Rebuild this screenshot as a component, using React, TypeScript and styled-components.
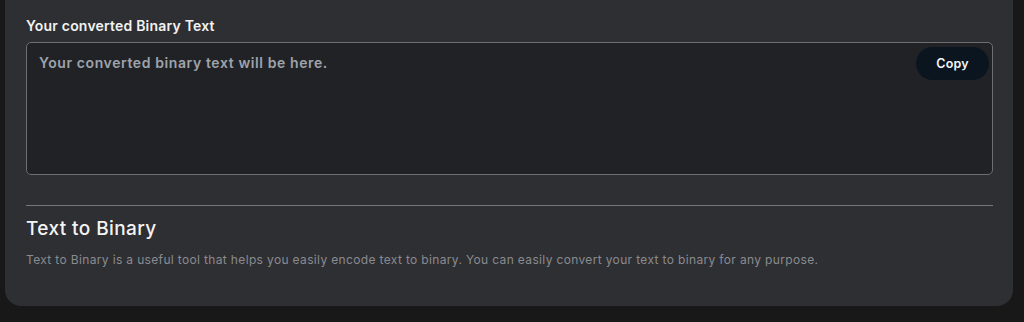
import React from "react";
import styled, { createGlobalStyle } from "styled-components";

const Global = createGlobalStyle`
  html, body { margin: 0; padding: 0; background: #181819; }
  body { font-family: Inter, "Noto Sans", sans-serif; }
`;

const Page = styled.div`
  width: 1024px;
  height: 322px;
  overflow: hidden;
  padding: 0 11px 0 5px;
  box-sizing: border-box;
`;

const Card = styled.section`
  background: #2e2f33;
  border-radius: 0 0 16px 16px;
  padding: 17px 20px 38px 21px;
  display: flex;
  flex-direction: column;
`;

const Label = styled.label`
  color: #f2f2f2;
  font-size: 14px;
  font-weight: 600;
  letter-spacing: 0.2px;
  line-height: 17px;
  margin-bottom: 8px;
`;

const OutputBox = styled.div`
  position: relative;
  height: 133px;
  box-sizing: border-box;
  border: 1px solid #6d6e72;
  border-radius: 5px;
  background: #212226;
  padding: 11px 12px;
`;

const Placeholder = styled.div`
  color: #9ea3ab;
  font-size: 14px;
  font-weight: 600;
  letter-spacing: 0.6px;
  line-height: 18px;
`;

const CopyButton = styled.button`
  position: absolute;
  top: 4px;
  right: 3px;
  width: 73px;
  height: 33px;
  border: none;
  border-radius: 17px;
  background: #0b1520;
  color: #f3f4f6;
  font-family: Inter, sans-serif;
  font-size: 12.5px;
  font-weight: 600;
  letter-spacing: 0.2px;
  cursor: pointer;
`;

const Divider = styled.hr`
  border: none;
  border-top: 1px solid #76777b;
  margin: 30px 0 0 0;
`;

const Heading = styled.h2`
  margin: 11px 0 0 0;
  color: #f4f4f4;
  font-size: 19px;
  font-weight: 500;
  letter-spacing: 0.4px;
  line-height: 24px;
`;

const Description = styled.p`
  margin: 11px 0 0 0;
  color: #8a8b8f;
  font-size: 12px;
  letter-spacing: 0.35px;
  line-height: 16px;
`;

export default function App() {
  return (
    <>
      <Global />
      <Page>
        <Card>
          <Label>Your converted Binary Text</Label>
          <OutputBox>
            <Placeholder>Your converted binary text will be here.</Placeholder>
            <CopyButton>Copy</CopyButton>
          </OutputBox>
          <Divider />
          <Heading>Text to Binary</Heading>
          <Description>
            Text to Binary is a useful tool that helps you easily encode text to binary. You can easily convert your text to binary for any purpose.
          </Description>
        </Card>
      </Page>
    </>
  );
}
